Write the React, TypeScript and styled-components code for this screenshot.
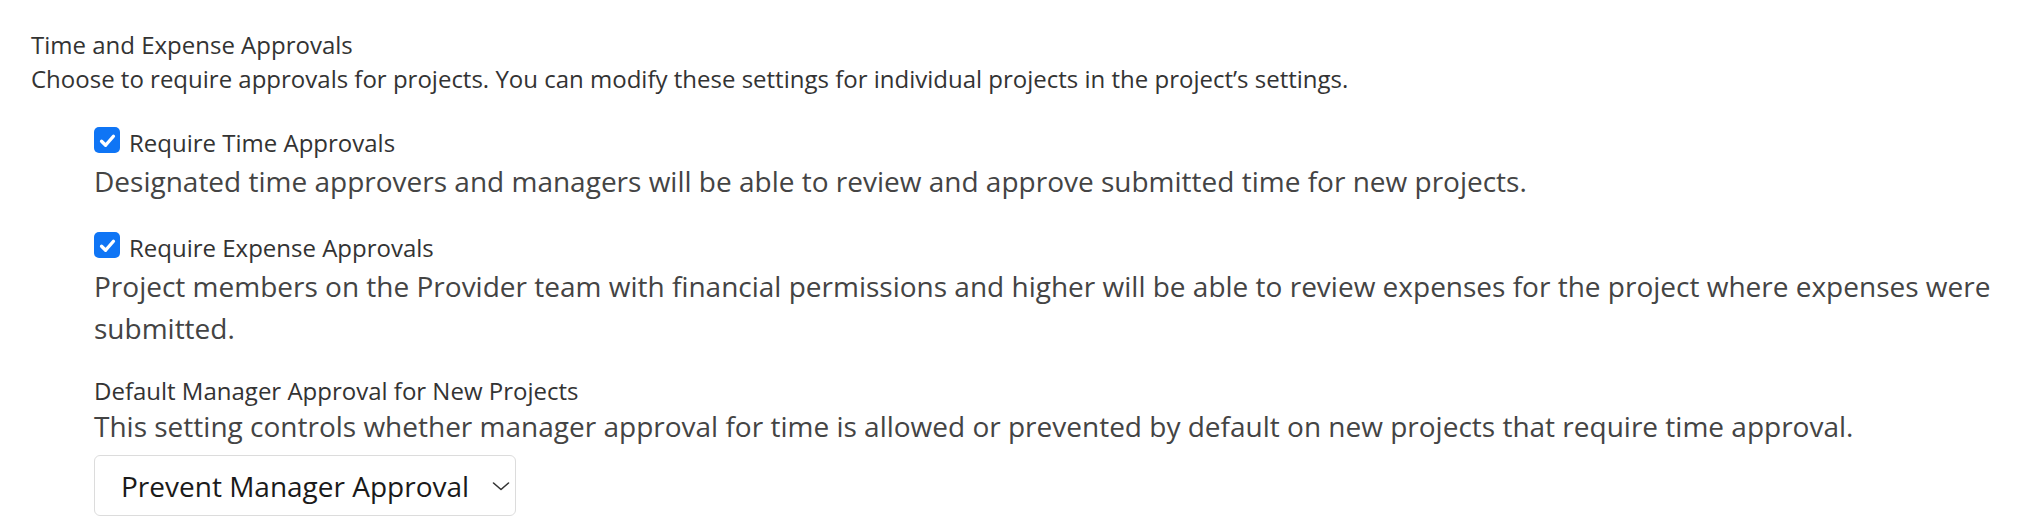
import React, { useState } from 'react';
import styled, { createGlobalStyle } from 'styled-components';

const GlobalStyle = createGlobalStyle`
  html, body {
    margin: 0;
    padding: 0;
    background: #ffffff;
  }
  body {
    font-family: 'Open Sans', 'Noto Sans', sans-serif;
    color: #333333;
  }
`;

const Wrapper = styled.section`
  padding: 28px 0 0 31px;
`;

const Heading = styled.div`
  font-size: 24px;
  line-height: 34px;
  color: #333333;
`;

const Hint = styled.div<{ $large?: boolean }>`
  font-size: ${p => (p.$large ? '28px' : '24px')};
  line-height: ${p => (p.$large ? '42px' : '34px')};
  color: ${p => (p.$large ? '#444444' : '#333333')};
`;

const OptionList = styled.div`
  margin: 30px 0 0 63px;
  display: flex;
  flex-direction: column;
`;

const Option = styled.div`
  & + & {
    margin-top: 29px;
  }
`;

const CheckRow = styled.label`
  display: flex;
  align-items: center;
  gap: 9px;
  font-size: 24px;
  line-height: 34px;
  color: #333333;
  cursor: pointer;
`;

const HiddenInput = styled.input`
  position: absolute;
  opacity: 0;
  width: 0;
  height: 0;
`;

const Box = styled.span<{ $checked: boolean }>`
  width: 26px;
  height: 26px;
  flex: none;
  border-radius: 5px;
  box-sizing: border-box;
  display: flex;
  align-items: center;
  justify-content: center;
  margin-top: -6px;
  background: ${p => (p.$checked ? '#0f75f5' : '#ffffff')};
  border: ${p => (p.$checked ? 'none' : '1.5px solid #8a8a8a')};
`;

const ManagerBlock = styled.div`
  margin-top: 25px;

  & > ${Heading} {
    margin-bottom: -3px;
  }
`;

const SelectWrap = styled.div`
  position: relative;
  width: 422px;
  margin-top: 8px;
`;

const Select = styled.select`
  appearance: none;
  width: 100%;
  height: 61px;
  box-sizing: border-box;
  padding: 0 30px 0 26px;
  border: 1.5px solid #dcdcdc;
  border-radius: 6px;
  background: #ffffff;
  font-family: 'Open Sans', 'Noto Sans', sans-serif;
  font-size: 28px;
  color: #1a1a1a;
  outline: none;
`;

const Chevron = styled.svg`
  position: absolute;
  right: 0;
  top: 50%;
  transform: translateY(-50%);
  pointer-events: none;
`;

const CheckOption: React.FC<{ label: string; text: string }> = ({ label, text }) => {
  const [checked, setChecked] = useState(true);
  return (
    <Option>
      <CheckRow>
        <HiddenInput type="checkbox" checked={checked} onChange={e => setChecked(e.currentTarget.checked)} />
        <Box $checked={checked}>
          {checked && (
            <svg width="19" height="19" viewBox="0 0 16 16">
              <path d="M3 8.6 L6.4 12 L13 4.4" fill="none" stroke="#ffffff" strokeWidth="2.8" strokeLinecap="round" strokeLinejoin="round" />
            </svg>
          )}
        </Box>
        {label}
      </CheckRow>
      <Hint $large>{text}</Hint>
    </Option>
  );
};

const App: React.FC = () => {
  const [approval, setApproval] = useState('prevent');

  return (
    <Wrapper>
      <GlobalStyle />
      <Heading>Time and Expense Approvals</Heading>
      <Hint>
        Choose to require approvals for projects. You can modify these settings for individual projects in the project’s settings.
      </Hint>
      <OptionList>
        <CheckOption
          label="Require Time Approvals"
          text="Designated time approvers and managers will be able to review and approve submitted time for new projects."
        />
        <CheckOption
          label="Require Expense Approvals"
          text="Project members on the Provider team with financial permissions and higher will be able to review expenses for the project where expenses were submitted."
        />
        <ManagerBlock>
          <Heading>Default Manager Approval for New Projects</Heading>
          <Hint $large>
            This setting controls whether manager approval for time is allowed or prevented by default on new projects that require time approval.
          </Hint>
          <SelectWrap>
            <Select value={approval} onChange={e => setApproval(e.currentTarget.value)}>
              <option value="prevent">Prevent Manager Approval</option>
              <option value="allow">Allow Manager Approval</option>
            </Select>
            <Chevron width="30" height="20" viewBox="0 0 30 20">
              <path d="M7.5 7 L15 13.5 L22.5 7" fill="none" stroke="#333333" strokeWidth="1.6" strokeLinecap="round" strokeLinejoin="round" />
            </Chevron>
          </SelectWrap>
        </ManagerBlock>
      </OptionList>
    </Wrapper>
  );
};

export default App;
